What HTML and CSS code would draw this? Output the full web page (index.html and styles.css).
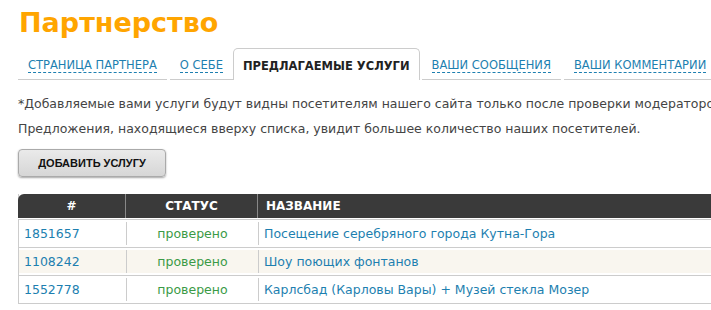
FILE: index.html
```html
<!DOCTYPE html>
<html lang="ru">
<head>
  <meta charset="UTF-8" />
  <title>Партнерство</title>
  <link rel="stylesheet" href="styles.css">
</head>
<body>
  <div class="page">

    <h1 class="title">Партнерство</h1>

    <!-- Tabs -->
    <ul class="tabs">
      <li class="tab"><a href="#">СТРАНИЦА ПАРТНЕРА</a></li>
      <li class="tab"><a href="#">О СЕБЕ</a></li>
      <li class="tab active"><span>ПРЕДЛАГАЕМЫЕ УСЛУГИ</span></li>
      <li class="tab"><a href="#">ВАШИ СООБЩЕНИЯ</a></li>
      <li class="tab"><a href="#">ВАШИ КОММЕНТАРИИ</a></li>
    </ul>

    <p class="note">*Добавляемые вами услуги будут видны посетителям нашего сайта только после проверки модератором.</p>
    <p class="note">Предложения, находящиеся вверху списка, увидит большее количество наших посетителей.</p>

    <button class="add-btn">ДОБАВИТЬ УСЛУГУ</button>

    <!-- Services table -->
    <div class="services">
      <div class="row head">
        <div class="cell id">#</div>
        <div class="cell status">СТАТУС</div>
        <div class="cell name">НАЗВАНИЕ</div>
      </div>
      <div class="row">
        <div class="cell id"><a href="#">1851657</a></div>
        <div class="cell status">проверено</div>
        <div class="cell name"><a href="#">Посещение серебряного города Кутна-Гора</a></div>
      </div>
      <div class="row odd">
        <div class="cell id"><a href="#">1108242</a></div>
        <div class="cell status">проверено</div>
        <div class="cell name"><a href="#">Шоу поющих фонтанов</a></div>
      </div>
      <div class="row">
        <div class="cell id"><a href="#">1552778</a></div>
        <div class="cell status">проверено</div>
        <div class="cell name"><a href="#">Карлсбад (Карловы Вары) + Музей стекла Мозер</a></div>
      </div>
    </div>

  </div>
</body>
</html>
```

FILE: styles.css
```css
* {
  margin: 0;
  padding: 0;
  box-sizing: border-box;
}

html, body {
  overflow: hidden;
}

body {
  background-color: #fff;
  color: #333;
  font-family: 'DejaVu Sans', Verdana, sans-serif;
  font-size: 12.5px;
}

.page {
  width: 780px;
  padding: 6px 0 0 18px;
}

.title {
  font-size: 27px;
  font-weight: bold;
  color: #ffa500;
  line-height: 34px;
  padding-left: 1px;
}

/* Tabs */

.tabs {
  list-style: none;
  display: flex;
  gap: 3px;
  margin-top: 8px;
  height: 32px;
}

.tab {
  height: 32px;
  padding: 0 10px;
  line-height: 35px;
  border-bottom: 1px solid #ccc;
  font-size: 11.5px;
}

.tab a {
  color: #1d7fb0;
  text-decoration: none;
  border-bottom: 1px dashed #1d7fb0;
}

.tab.active {
  border: 1px solid #ccc;
  border-bottom: none;
  border-radius: 5px 5px 0 0;
  font-weight: bold;
  color: #222;
  padding: 0 9px;
  margin: 0 -1px 0 -3px;
}

.tab:last-child {
  flex: 1;
}

/* Notes */

.note {
  margin-top: 17px;
  line-height: 14px;
  white-space: nowrap;
  color: #444;
}

.note + .note {
  margin-top: 11px;
}

.add-btn {
  display: block;
  margin-top: 13px;
  width: 148px;
  height: 28px;
  font-family: 'Liberation Sans', Arial, sans-serif;
  font-size: 11px;
  font-weight: bold;
  color: #111;
  background: linear-gradient(#eaeaea, #d6d6d6);
  border: 1px solid #aaa;
  border-radius: 4px;
  box-shadow: 0 1px 2px rgba(0, 0, 0, 0.35);
  cursor: pointer;
}

/* Table */

.services {
  margin-top: 17px;
  border-left: 1px solid #ccc;
}

.row {
  display: grid;
  grid-template-columns: 107px 132px 1fr;
  padding: 2px 0;
  border-bottom: 1px solid #ccc;
  height: 28px;
}

.row .cell {
  line-height: 23px;
  border-left: 1px solid #ccc;
  padding: 0 5px;
}

.row .cell:first-child {
  border-left: none;
}

.row.odd .cell {
  background-color: #f9f6ef;
}

.cell.status {
  color: #3a9a46;
  text-align: center;
}

.row.head {
  background: linear-gradient(#3a3a3a 24px, #fff 24px);
  font-weight: bold;
  font-size: 12px;
  height: 26px;
  padding: 0;
  border-radius: 6px 0 0 0;
  margin-left: -1px;
}

.row.head .cell {
  color: #fff;
  line-height: 24px;
  height: 24px;
  border-left-color: #888;
  padding: 0 8px;
}

.row.head .cell.id {
  text-align: center;
}

.cell a {
  color: #1d7fb0;
  text-decoration: none;
}
```
